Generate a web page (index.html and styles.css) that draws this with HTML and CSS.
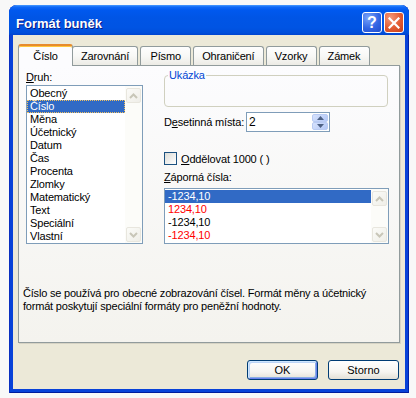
FILE: index.html
```html
<!DOCTYPE html>
<html lang="cs">
<head>
    <meta charset="UTF-8">
    <title>Formát buněk</title>
    <link rel="stylesheet" href="styles.css">
</head>
<body>
    <div class="window">
        <div class="titlebar">
            <span class="title">Formát buněk</span>
            <div class="title-buttons">
                <span class="tb-btn help">?</span>
                <span class="tb-btn close">
                    <svg width="12" height="12" viewBox="0 0 12 12"><path d="M1.5 1.5 L10.5 10.5 M10.5 1.5 L1.5 10.5" stroke="#fff" stroke-width="2.2" stroke-linecap="square"/></svg>
                </span>
            </div>
        </div>

        <div class="frame">
            <div class="tabs">
                <div class="tab active">Číslo</div>
                <div class="tab">Zarovnání</div>
                <div class="tab">Písmo</div>
                <div class="tab">Ohraničení</div>
                <div class="tab">Vzorky</div>
                <div class="tab">Zámek</div>
            </div>

            <div class="panel">
                <div class="columns">
                    <div class="col">
                        <div class="field-label"><u>D</u>ruh:</div>
                        <div class="listbox kinds">
                            <ul class="items">
                                <li>Obecný</li>
                                <li class="selected focused">Číslo</li>
                                <li>Měna</li>
                                <li>Účetnický</li>
                                <li>Datum</li>
                                <li>Čas</li>
                                <li>Procenta</li>
                                <li>Zlomky</li>
                                <li>Matematický</li>
                                <li>Text</li>
                                <li>Speciální</li>
                                <li>Vlastní</li>
                            </ul>
                            <div class="scrollbar">
                                <span class="sb-btn"><svg width="9" height="6" viewBox="0 0 9 6"><path d="M1 5 L4.5 1.5 L8 5" fill="none" stroke="#c8c6b8" stroke-width="2"/></svg></span>
                                <span class="sb-btn"><svg width="9" height="6" viewBox="0 0 9 6"><path d="M1 1 L4.5 4.5 L8 1" fill="none" stroke="#c8c6b8" stroke-width="2"/></svg></span>
                            </div>
                        </div>
                    </div>

                    <div class="col">
                        <fieldset class="sample">
                            <legend>Ukázka</legend>
                            <div class="sample-body"></div>
                        </fieldset>

                        <div class="decimals">
                            <label class="decimals-label">D<u>e</u>setinná místa:</label>
                            <div class="spin">
                                <span class="spin-value">2</span>
                                <div class="spin-buttons">
                                    <span class="spin-btn"><svg width="7" height="4" viewBox="0 0 7 4"><path d="M0 4 L3.5 0 L7 4 Z" fill="#4d6185"/></svg></span>
                                    <span class="spin-btn"><svg width="7" height="4" viewBox="0 0 7 4"><path d="M0 0 L3.5 4 L7 0 Z" fill="#4d6185"/></svg></span>
                                </div>
                            </div>
                        </div>

                        <label class="check"><span class="check-box"></span><span><u>O</u>ddělovat 1000 ( )</span></label>

                        <div class="field-label negatives-label"><u>Z</u>áporná čísla:</div>
                        <div class="listbox negatives">
                            <ul class="items">
                                <li class="selected">-1234,10</li>
                                <li class="red">1234,10</li>
                                <li>-1234,10</li>
                                <li class="red">-1234,10</li>
                            </ul>
                            <div class="scrollbar">
                                <span class="sb-btn"><svg width="9" height="6" viewBox="0 0 9 6"><path d="M1 5 L4.5 1.5 L8 5" fill="none" stroke="#c8c6b8" stroke-width="2"/></svg></span>
                                <span class="sb-btn"><svg width="9" height="6" viewBox="0 0 9 6"><path d="M1 1 L4.5 4.5 L8 1" fill="none" stroke="#c8c6b8" stroke-width="2"/></svg></span>
                            </div>
                        </div>
                    </div>
                </div>

                <p class="desc">Číslo se používá pro obecné zobrazování čísel. Formát měny a účetnický<br>formát poskytují speciální formáty pro peněžní hodnoty.</p>
            </div>

            <div class="buttons">
                <button class="btn default">OK</button>
                <button class="btn">Storno</button>
            </div>
        </div>
    </div>
</body>
</html>
```

FILE: styles.css
```css
body {
    margin: 0;
    background: #f8f8f8;
    font-family: "Liberation Sans", Arial, sans-serif;
    font-size: 11px;
    letter-spacing: -0.15px;
    color: #000;
}

/* window frame */
.window {
    margin: 5px 0 0 9px;
    width: 400px;
    height: 388px;
    display: flex;
    flex-direction: column;
    background: #0842d8;
    border-radius: 8px 8px 0 0;
    box-shadow: inset 1px 0 #0a2fc0, inset -1px 0 #0020a8, inset 0 -1px #001c9c;
}
.titlebar {
    height: 30px;
    display: flex;
    justify-content: space-between;
    align-items: flex-start;
    padding: 0 5px 0 7px;
    border-radius: 8px 8px 0 0;
    background: linear-gradient(#4a9cff 0, #0f68f7 2px, #0059ef 5px, #0055e6 40%, #0054e3 75%, #004fdb 92%, #0044cf 100%);
}
.title {
    margin-top: 11px;
    color: #fff;
    font-weight: bold;
    font-size: 13px;
    line-height: 16px;
    letter-spacing: 0;
    text-shadow: 1px 1px #0a1883;
}
.title-buttons {
    display: flex;
    gap: 2px;
    margin-top: 7px;
}
.tb-btn {
    width: 20px;
    height: 21px;
    box-sizing: border-box;
    border: 1px solid #fff;
    border-radius: 3px;
    display: flex;
    align-items: center;
    justify-content: center;
    color: #fff;
}
.help {
    background: radial-gradient(circle at 30% 25%, #7aa5fb, #3366e4 55%, #1f4ccc);
    font-weight: bold;
    font-size: 16px;
    letter-spacing: 0;
}
.close {
    background: radial-gradient(circle at 30% 25%, #f4987a, #e25a31 55%, #c8401a);
}

.frame {
    flex: 1;
    margin: 0 4px 4px;
    padding: 8px 5px 0;
    background: #ece9d8;
    display: flex;
    flex-direction: column;
}

/* tabs */
.tabs {
    height: 22px;
    display: flex;
    align-items: flex-end;
    padding-left: 2px;
    position: relative;
    z-index: 1;
}
.tab {
    height: 19px;
    min-width: 51px;
    box-sizing: border-box;
    padding: 0 8px;
    margin-right: 2px;
    border: 1px solid #919b9c;
    border-bottom: none;
    border-radius: 3px 3px 0 0;
    background: linear-gradient(#fefefe, #f8f8f6 50%, #ecebe5);
    display: flex;
    align-items: center;
    justify-content: center;
}
.tab.active {
    position: relative;
    z-index: 2;
    height: 22px;
    min-width: 55px;
    padding: 0 10px;
    margin: 0 -1px -1px -2px;
    background: #fcfcfe;
    border-top: 2px solid #e68b2c;
    box-shadow: inset 0 1px #ffc73c;
}

.panel {
    height: 278px;
    box-sizing: border-box;
    padding: 5px 10px 0 7px;
    border: 1px solid #919b9c;
    background: linear-gradient(#fcfcfe, #f4f3ee);
    box-shadow: 1px 1px 0 #d6d3c4;
}
.columns {
    display: grid;
    grid-template-columns: 117px 225px;
    column-gap: 21px;
}
.field-label {
    line-height: 13px;
    margin-bottom: 1px;
}

/* list boxes */
.listbox {
    display: flex;
    box-sizing: border-box;
    border: 1px solid #7f9db9;
    background: #fff;
}
.kinds { height: 159px; }
.negatives { height: 56px; }
.items {
    flex: 1;
    list-style: none;
    margin: 0;
    padding: 1px 0 0;
}
.items li {
    height: 13px;
    line-height: 13px;
    padding-left: 3px;
    white-space: nowrap;
}
.items .selected {
    background: #316ac5;
    color: #fff;
}
.items .focused {
    outline: 1px dotted #f0c060;
    outline-offset: -1px;
}
.items .red { color: #ff0000; }

.scrollbar {
    width: 17px;
    box-sizing: border-box;
    padding: 2px 1px 1px;
    display: flex;
    flex-direction: column;
    justify-content: space-between;
    background: #fcfcf9;
}
.sb-btn {
    width: 15px;
    height: 15px;
    box-sizing: border-box;
    border: 1px solid #e8e6de;
    border-radius: 2px;
    background: linear-gradient(135deg, #fbfbf8, #efeee8);
    display: flex;
    align-items: center;
    justify-content: center;
}

/* right column */
.sample {
    margin: -2px 0 0;
    padding: 0;
    width: 224px;
    box-sizing: border-box;
    border: 1px solid #d0d0bf;
    border-radius: 4px;
}
.sample legend {
    margin-left: 3px;
    padding: 0 1px;
    line-height: 13px;
    color: #0046d5;
}
.sample-body { height: 24px; }

.decimals {
    display: flex;
    align-items: center;
    margin-top: 5px;
}
.decimals-label { width: 82px; }
.spin {
    width: 84px;
    height: 20px;
    box-sizing: border-box;
    border: 1px solid #7f9db9;
    background: #fff;
    display: flex;
    justify-content: space-between;
}
.spin-value {
    padding-left: 2px;
    line-height: 18px;
    font-size: 12px;
}
.spin-buttons {
    width: 16px;
    margin: 1px;
    display: flex;
    flex-direction: column;
}
.spin-btn {
    flex: 1;
    border: 1px solid #b9cbf3;
    border-radius: 2px;
    background: linear-gradient(135deg, #d6e2fd, #b4c8f6);
    display: flex;
    align-items: center;
    justify-content: center;
}

.check {
    display: flex;
    align-items: center;
    gap: 4px;
    height: 13px;
    margin-top: 20px;
}
.check-box {
    width: 13px;
    height: 13px;
    box-sizing: border-box;
    border: 1px solid #1c5180;
    background: linear-gradient(135deg, #dcdcd7, #fff);
}
.negatives-label {
    margin-top: 6px;
    margin-bottom: 4px;
}

.desc {
    margin: 43px 0 0 -3px;
    line-height: 13px;
    letter-spacing: -0.2px;
}

/* dialog buttons */
.buttons {
    display: flex;
    justify-content: flex-end;
    gap: 10px;
    margin-top: 17px;
    padding-right: 1px;
}
.btn {
    width: 71px;
    height: 20px;
    padding: 0;
    border: 1px solid #003c74;
    border-radius: 3px;
    background: linear-gradient(#fff, #f6f5f1 60%, #e3e0d6);
    font: inherit;
    color: #000;
}
.btn.default {
    box-shadow: inset 1px 1px #cee7ff, inset -1px -1px #6982ee, inset 2px 2px #bcd4f6, inset -2px -2px #89ade4;
}
```
